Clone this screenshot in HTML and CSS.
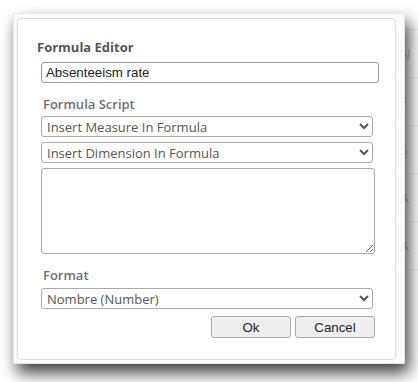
FILE: index.html
```html
<!DOCTYPE html>
<html lang="en">
  <head>
    <meta charset="UTF-8" />
    <title>Formula Editor</title>
    <link rel="stylesheet" href="styles.css">
  </head>
  <body>

    <div class="page">
      <div class="list">
        <div class="list-head"></div>
        <div class="list-row">N</div>
        <div class="list-row">F</div>
        <div class="list-row">S</div>
        <div class="list-row">A</div>
        <div class="list-row">A</div>
      </div>
    </div>

    <div class="dialog">
      <div class="panel">
        <h3 class="title">Formula Editor</h3>
        <input class="name" type="text" value="Absenteeism rate" />

        <p class="label">Formula Script</p>
        <select class="pick">
          <option>Insert Measure In Formula</option>
        </select>
        <select class="pick">
          <option>Insert Dimension In Formula</option>
        </select>
        <textarea class="script"></textarea>

        <p class="label format-label">Format</p>
        <select class="pick">
          <option>Nombre (Number)</option>
        </select>

        <div class="actions">
          <button>Ok</button>
          <button>Cancel</button>
        </div>
      </div>
    </div>

  </body>
</html>
```

FILE: styles.css
```css
* {
  margin: 0;
  padding: 0;
  box-sizing: border-box;
}
body {
  width: 418px;
  height: 382px;
  overflow: hidden;
  background: #fff;
  font-family: "Open Sans", sans-serif;
}

/* page behind the dialog */
.page {
  display: flex;
  justify-content: flex-end;
}
.list {
  width: 26px;
}
.list-head {
  height: 30px;
  border-bottom: 1px solid #ececec;
}
.list-row {
  height: 48px;
  border-bottom: 1px solid #ececec;
  display: flex;
  align-items: center;
  padding-left: 8px;
  font-size: 14px;
  color: #c8c8c8;
}

/* dialog */
.dialog {
  position: absolute;
  left: 13px;
  top: 13px;
  width: 392px;
  height: 351px;
  padding: 4px 8px 3px 3px;
  background: rgba(250, 250, 250, 0.85);
  border: 1px solid rgba(0, 0, 0, 0.08);
  border-radius: 2px;
  box-shadow: 4px 9px 16px rgba(0, 0, 0, 0.75);
}
.panel {
  height: 100%;
  background: #fff;
  border: 1px solid #dcdcdc;
  border-radius: 4px;
  padding: 19px 0 0 23px;
}
.title {
  font-size: 13px;
  font-weight: 700;
  color: #555;
  line-height: 18px;
  margin-left: -4px;
}
.name {
  display: block;
  width: 338px;
  height: 21px;
  margin-top: 6px;
  border: 1px solid #999;
  border-radius: 3px;
  padding: 0 4px;
  font-family: "Liberation Sans", Arial, sans-serif;
  font-size: 13.3px;
  color: #222;
  outline: 0;
}
.label {
  font-size: 13px;
  font-weight: 600;
  color: #6f6f6f;
  line-height: 18px;
  margin: 12px 0 3px 2px;
}
.format-label {
  margin: 12px 0 4px 2px;
}
.pick {
  display: block;
  width: 332px;
  height: 21px;
  margin-bottom: 5px;
  border: 1px solid #aaa;
  border-radius: 3px;
  padding: 0 1px;
  font-family: "Open Sans", sans-serif;
  font-size: 13px;
  color: #555;
  background: #fff;
}
.script {
  display: block;
  width: 334px;
  height: 86px;
  border: 1px solid #aaa;
  border-radius: 3px;
  resize: both;
}
.actions {
  display: flex;
  justify-content: flex-end;
  gap: 4px;
  width: 334px;
  margin-top: 7px;
}
.actions button {
  width: 80px;
  height: 22px;
  border: 1px solid #aaa;
  border-radius: 3px;
  background: #efefef;
  font-family: "Liberation Sans", Arial, sans-serif;
  font-size: 13.3px;
  color: #222;
}
```
